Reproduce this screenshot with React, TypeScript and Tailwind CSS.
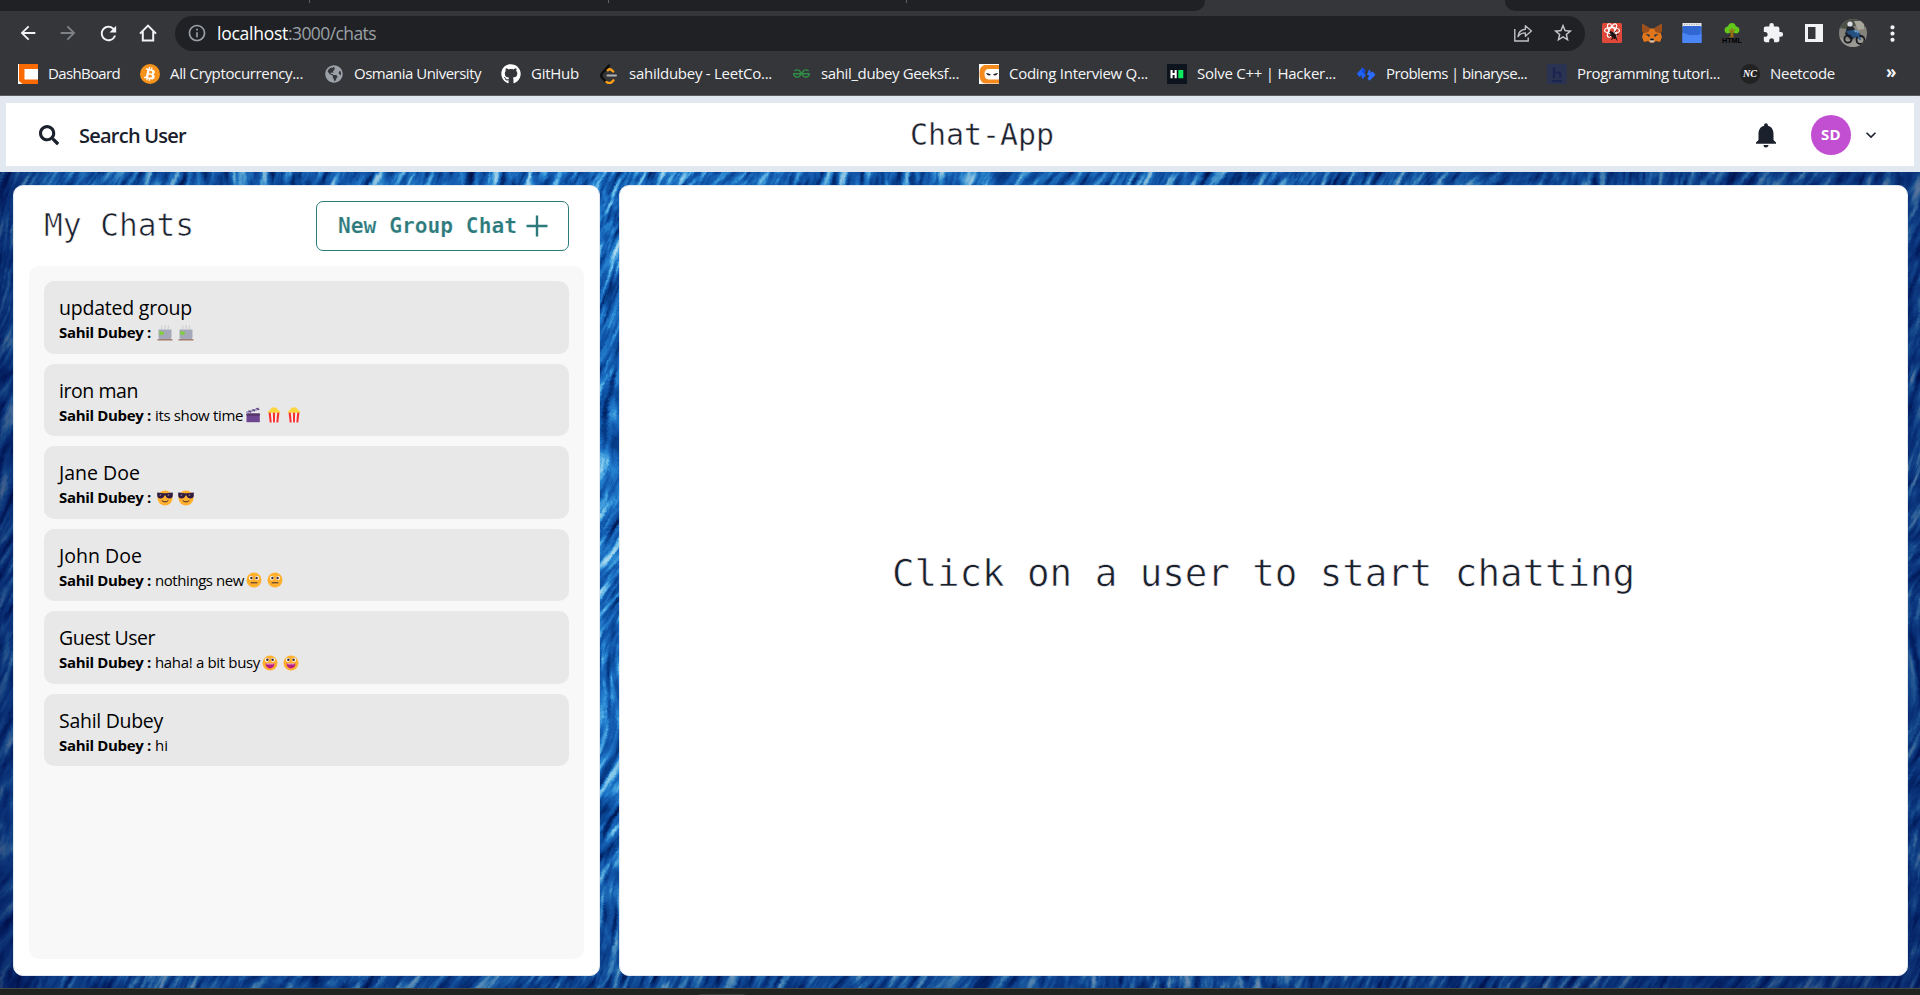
import { useLayoutEffect, useRef, type ReactNode } from "react";
import { FaSearch, FaGithub, FaBtc, FaGlobeAmericas } from "react-icons/fa";
import { SiGeeksforgeeks } from "react-icons/si";
import {
  MdArrowBack,
  MdArrowForward,
  MdRefresh,
  MdInfoOutline,
  MdStarBorder,
  MdExtension,
  MdMoreVert,
  MdNotifications,
  MdExpandMore,
} from "react-icons/md";

/** One line of text whose letter spacing is adjusted to fill a given width. */
function Fit({ text, width, className = "" }: { text: string; width: number; className?: string }) {
  const ref = useRef<HTMLSpanElement>(null);
  useLayoutEffect(() => {
    const el = ref.current;
    if (!el) return;
    el.style.letterSpacing = "0px";
    const natural = el.getBoundingClientRect().width;
    el.style.letterSpacing = `${(width - natural) / text.length}px`;
  }, [text, width]);
  return (
    <span ref={ref} className={`inline-block shrink-0 whitespace-pre ${className}`}>
      {text}
    </span>
  );
}

/* ---------- browser chrome ---------- */

const HomeIcon = () => (
  <svg viewBox="0 0 20 20" className="size-5" fill="none" stroke="#f1f3f4" strokeWidth="2">
    <path d="M2 10.6 10 2.6l8 8M4.8 8.6V17.6h10.4V8.6" />
  </svg>
);

const ShareIcon = () => (
  <svg viewBox="0 0 20 20" className="size-5" fill="none" stroke="#bdc1c6" strokeWidth="1.4">
    <path d="M1.800 6v12h13.400v-3.400" />
    <path d="M5 13.600c.5-4.600 3-7 7.400-7.300V2.800L18.400 8l-6 5.200V9.900C9 9.900 6.800 11 5 13.600Z" strokeLinejoin="round" />
  </svg>
);

const ReactDevIcon = () => (
  <svg viewBox="0 0 20 20" className="size-5">
    <rect width="20" height="20" rx="1.500" fill="#e0483a" />
    <g fill="none" stroke="#fff" strokeWidth="1.200">
      <ellipse cx="10" cy="7.500" rx="7.500" ry="2.800" />
      <ellipse cx="10" cy="7.500" rx="7.500" ry="2.800" transform="rotate(60 10 7.500)" />
      <ellipse cx="10" cy="7.500" rx="7.500" ry="2.800" transform="rotate(120 10 7.500)" />
    </g>
    <g fill="#1c1110" stroke="#1c1110">
      <ellipse cx="11.500" cy="12.500" rx="1.700" ry="3.300" transform="rotate(-38 11.500 12.500)" />
      <circle cx="8.700" cy="9.300" r=".9" />
      <path d="m7.500 13 3-1.500M9.500 17l1.600-3M12.500 9.500l1.700-2M13.500 12l3-.4M13.500 14l1.700 3.500" strokeWidth="1" />
    </g>
  </svg>
);

const FoxIcon = () => (
  <svg viewBox="0 0 20 20" className="size-5">
    <path d="M.6 1 8 5.500h4L19.400 1 20 6.500l-1.300 3.700L20 14l-2 5-4-1-2 1.600H8L6 18l-4 1-2-5 1.300-3.800L0 6.500Z" fill="#e2761b" />
    <path d="M.6 1 8 5.500 6.500 9l-5.200 1.200L0 6.500ZM19.400 1 12 5.500 13.500 9l5.200 1.200L20 6.500Z" fill="#9a4f1c" />
    <path d="m3.500 10.800 4.500 1-1 2.200ZM16.500 10.800l-4.500 1 1 2.200Z" fill="#233447" />
    <path d="m7.500 17 1-1.400h3l1 1.400-.8 2.400H8.300Z" fill="#d7c1b3" />
    <path d="M8.500 15.600h3l.6 1.600H7.900Z" fill="#161616" />
  </svg>
);

const BlueNoteIcon = () => (
  <svg viewBox="0 0 20 20" className="size-5">
    <rect x=".5" width="19" height="4" fill="#e8eaed" />
    <path d="M2 1.300h16" stroke="#9aa0a6" strokeDasharray="1.200 1.200" />
    <path d="M.5 3h19v17H.5Z" fill="#4a83ee" />
    <path d="M1.200 3h17.600l-.8 9H8L1.200 10Z" fill="#3167d3" />
    <path d="M.5 9.500c3 2.500 6 3.300 10 3.300s7-1 9-2V20H.5Z" fill="#4a86f5" />
  </svg>
);

const TreeIcon = () => (
  <svg viewBox="0 0 20 20" className="size-5">
    <path d="M8.600 8h2.800v6.500h1.800H6.800L8.600 13Z" fill="#9a6a14" />
    <path d="M10 0c2.400 0 3.600 1.500 3.800 3.200C16 3.400 17.500 5 17.500 7S16 10.400 14 10.400c-1 0-1.800-.4-2.300-.8H8.300c-.6.5-1.400.8-2.300.8C4 10.400 2.500 9 2.500 7S4 3.400 6.200 3.200C6.400 1.500 7.600 0 10 0Z" fill="#62c81c" />
    <path d="m10 13-.2-8M10 9l3-2.500M10 9.500 7.200 7" stroke="#9a6a14" strokeWidth="1.200" fill="none" />
    <text x="0" y="19.500" fontSize="6.500" fontWeight="900" fontFamily="Liberation Sans, sans-serif" textLength="20" lengthAdjust="spacingAndGlyphs" fill="#000">
      HTML
    </text>
  </svg>
);

const SidePanelIcon = () => (
  <svg viewBox="0 0 20 20" className="size-5">
    <path d="M1 1h18v18H1Zm3 3v12h7.500V4Z" fill="#f1f3f4" fillRule="evenodd" />
  </svg>
);

const ProfilePicture = () => (
  <svg viewBox="0 0 28 28" className="size-7">
    <defs>
      <clipPath id="profile">
        <circle cx="14" cy="14" r="14" />
      </clipPath>
    </defs>
    <g clipPath="url(#profile)">
      <rect width="28" height="28" fill="#85827c" />
      <path d="M0 0h28v8L18 6 8 10 0 9Z" fill="#4b5046" />
      <path d="M15 2h10v8l-6 1Z" fill="#a9a69c" />
      <path d="M0 18l12 4 16-4v10H0Z" fill="#9b9792" />
      <path d="M8 8c3-2 7-1 8 3l2 6-6 4-6-6Z" fill="#20242b" />
      <circle cx="11" cy="5" r="2.600" fill="#d7dade" />
      <path d="m7 12 7-1 8 4-3 4-8-1Z" fill="#244f7e" />
      <path d="m14 11 6 1-2 3Z" fill="#6aa0d0" />
      <g fill="none" stroke="#15181c" strokeWidth="1.800">
        <circle cx="21.500" cy="21" r="4" />
        <circle cx="9" cy="20" r="3.600" />
      </g>
      <path d="m17 13 4.500 8" stroke="#2d5f95" strokeWidth="1.600" />
    </g>
  </svg>
);

const ChefBoxIcon = () => (
  <svg viewBox="0 0 20 20" className="size-5">
    <rect width="20" height="20" fill="#fff" />
    <path d="M1 0h19v5H6.500v10.500H20V20H4.500L1 17Z" fill="#f96a02" />
  </svg>
);

const LeetIcon = () => (
  <svg viewBox="0 0 20 20" className="size-5" fill="none" strokeWidth="2.400" strokeLinecap="round" strokeLinejoin="round">
    <path d="M10 1.500 3 9.500c-1 1.200-1 2.800 0 4l4 4.300" stroke="#0c0c0c" />
    <path d="m8.800 6.200 1.400-.9c.8-.3 1.500-.1 2.200.5l1.800 1.700M7.500 17.900c1.800 1.500 4 1.400 5.500 0l1.500-1.600" stroke="#ffa116" />
    <path d="M8.500 11.600H17" stroke="#b3b3b3" strokeWidth="2" />
  </svg>
);

const NinjaIcon = () => (
  <svg viewBox="0 0 20 20" className="size-5">
    <rect width="20" height="20" fill="#fff" />
    <path d="M7 1h13v4H9.500C7 5 5.500 6.500 5.500 10S7 15.400 9.500 15.400H20V19.500H7c-4 0-6.500-3-6.500-9.500S3 1 7 1Z" fill="#f58a1f" />
    <path d="M7 9c2 .2 3.500.6 5 1.700-1.500 1.200-4 1-5-1.700ZM19 9c-2 .2-3.500.6-5 1.700 1.500 1.200 4 1 5-1.700Z" fill="#222" />
  </svg>
);

const HackerIcon = () => (
  <svg viewBox="0 0 20 20" className="size-5">
    <rect width="20" height="20" fill="#0e141e" />
    <path d="M3.500 6H5.600v3h2V6h2.100v8.200H7.600V11h-2v3.200H3.500Z" fill="#fff" />
    <rect x="11.300" y="6" width="5" height="8.200" fill="#0bea5c" />
  </svg>
);

const BinaryIcon = () => (
  <svg viewBox="0 0 20 20" className="size-5">
    <path d="M6.500 3.500 9.500 6.500 8 9.500l2 1-3 4.500-1.500-1.500.5-2.500L3.500 13 .8 9.800Z" fill="#1f62f5" />
    <path d="m13 5.500 1.500 1.500-.5 2 2.500-1.500 3 3.300-6 6-2-2 1.700-3-2.200-1.300Z" fill="#2c6bff" />
    <path d="m6.500 3.500 3 3L8 9.500 6 8Z" fill="#1447d8" />
  </svg>
);

const BoxedHIcon = () => (
  <svg viewBox="0 0 20 20" className="size-5">
    <rect width="20" height="20" fill="#2b3353" />
    <path d="M7 3v11M7 8.500h4.500c1.200 0 1.800.7 1.800 1.800V14M5 17.200h10" stroke="#1c2550" strokeWidth="2.200" fill="none" />
  </svg>
);

const BOOKMARKS: { label: string; slot: string; textWidth: number; icon: ReactNode }[] = [
  { label: "DashBoard", slot: "w-[122px]", textWidth: 72, icon: <ChefBoxIcon /> },
  {
    label: "All Cryptocurrency...",
    slot: "w-[184px]",
    textWidth: 133,
    icon: (
      <span className="grid size-5 place-items-center rounded-full bg-[#f7931a]">
        <FaBtc className="size-3.5 rotate-12 text-white" />
      </span>
    ),
  },
  {
    label: "Osmania University",
    slot: "w-[177px]",
    textWidth: 127,
    icon: (
      <span className="grid size-5 place-items-center">
        <FaGlobeAmericas className="size-[18px] text-[#9aa0a6]" />
      </span>
    ),
  },
  { label: "GitHub", slot: "w-[98px]", textWidth: 48, icon: <FaGithub className="size-5 text-white" /> },
  { label: "sahildubey - LeetCo...", slot: "w-[192px]", textWidth: 143, icon: <LeetIcon /> },
  {
    label: "sahil_dubey Geeksf...",
    slot: "w-[188px]",
    textWidth: 138,
    icon: (
      <span className="grid size-5 place-items-center">
        <SiGeeksforgeeks className="size-[17px] text-[#2f8d46]" />
      </span>
    ),
  },
  { label: "Coding Interview Q...", slot: "w-[188px]", textWidth: 139, icon: <NinjaIcon /> },
  { label: "Solve C++ | Hacker...", slot: "w-[189px]", textWidth: 139, icon: <HackerIcon /> },
  { label: "Problems | binaryse...", slot: "w-[191px]", textWidth: 141, icon: <BinaryIcon /> },
  { label: "Programming tutori...", slot: "w-[193px]", textWidth: 143, icon: <BoxedHIcon /> },
  {
    label: "Neetcode",
    slot: "w-[122px]",
    textWidth: 65,
    icon: (
      <span className="grid size-5 place-items-center rounded-full bg-[#222222] font-['Liberation_Serif',serif] text-[10px] leading-none font-bold text-white italic">
        NC
      </span>
    ),
  },
];

function TabStrip() {
  return (
    <div className="flex h-[11px] justify-between">
      <div className="flex w-[1205px] rounded-br-[10px] bg-[#202124]">
        <div className="h-[3px] w-[310px] border-r border-[#5f6368]" />
        <div className="h-[3px] w-[299px] border-r border-[#5f6368]" />
        <div className="h-[3px] w-[298px] border-r border-[#5f6368]" />
      </div>
      <div className="w-[415px] rounded-bl-[10px] bg-[#202124]" />
    </div>
  );
}

function Toolbar() {
  return (
    <div className="flex h-[44px] items-center">
      <div className="flex items-center gap-[18px] pl-[17px] text-[#f1f3f4]">
        <MdArrowBack className="size-[22px]" />
        <MdArrowForward className="size-[22px] text-[#7e8185]" />
        <MdRefresh className="size-[23px]" />
        <HomeIcon />
      </div>
      <div className="ml-[17px] flex h-[35px] w-[1410px] items-center rounded-full bg-[#202124] pr-[11px] pl-[12px]">
        <MdInfoOutline className="size-5 text-[#9aa0a6]" />
        <div className="ml-[10px] flex flex-1 text-[17.5px] leading-6">
          <Fit text="localhost" width={71} className="text-white" />
          <Fit text=":3000/chats" width={88} className="text-[#9aa0a6]" />
        </div>
        <ShareIcon />
        <MdStarBorder className="ml-[19px] size-[22px] text-[#c4c7cb]" />
      </div>
      <div className="ml-[17px] flex items-center gap-5">
        <ReactDevIcon />
        <FoxIcon />
        <BlueNoteIcon />
        <TreeIcon />
        <MdExtension className="size-[22px] text-[#f1f3f4]" />
        <SidePanelIcon />
      </div>
      <div className="ml-[15px]">
        <ProfilePicture />
      </div>
      <MdMoreVert className="ml-[13px] size-[25px] text-[#f1f3f4]" />
    </div>
  );
}

function BookmarksBar() {
  return (
    <div className="flex h-[41px] items-center border-b border-[#5a5b5f] pb-[3px] pl-[18px] text-[15px] leading-5 text-[#f4f5f6]">
      {BOOKMARKS.map((b) => (
        <div key={b.label} className={`flex shrink-0 items-center gap-[10px] ${b.slot}`}>
          {b.icon}
          <Fit text={b.label} width={b.textWidth} className="-mt-px" />
        </div>
      ))}
      <span className="ml-[24px] pb-1 text-[17px] font-bold">»</span>
    </div>
  );
}

/* ---------- page ---------- */

function PaintedBackground() {
  return (
    <svg className="absolute inset-0 size-full" preserveAspectRatio="none" viewBox="0 0 1920 816">
      <defs>
        <filter id="paint" x="0" y="0" width="100%" height="100%" colorInterpolationFilters="sRGB">
          <feTurbulence type="fractalNoise" baseFrequency="0.13 0.025" numOctaves="5" seed="8" result="fine" />
          <feTurbulence type="fractalNoise" baseFrequency="0.006 0.006" numOctaves="1" seed="3" result="warp" />
          <feDisplacementMap in="fine" in2="warp" scale="110" xChannelSelector="R" yChannelSelector="G" />
          <feColorMatrix values="1 0 0 0 0  1 0 0 0 0  1 0 0 0 0  0 0 0 0 1" />
          <feComponentTransfer>
            <feFuncR type="table" tableValues="0 0 0 0.020 0.050 0.090 0.150 0.350 0.600 0.700 0.700" />
            <feFuncG type="table" tableValues="0.080 0.080 0.120 0.210 0.310 0.390 0.520 0.700 0.820 0.860 0.860" />
            <feFuncB type="table" tableValues="0.260 0.260 0.370 0.500 0.630 0.720 0.820 0.900 0.930 0.950 0.950" />
          </feComponentTransfer>
        </filter>
        <linearGradient id="shade">
          <stop offset="0" stopColor="#020b45" stopOpacity="0.6" />
          <stop offset="0.03" stopColor="#020b45" stopOpacity="0.2" />
          <stop offset="0.3" stopColor="#020b45" stopOpacity="0" />
          <stop offset="0.65" stopColor="#020b45" stopOpacity="0.15" />
          <stop offset="1" stopColor="#020b45" stopOpacity="0.5" />
        </linearGradient>
        <linearGradient id="shadeDown" x2="0" y2="1">
          <stop offset="0.8" stopColor="#020b45" stopOpacity="0" />
          <stop offset="1" stopColor="#020b45" stopOpacity="0.3" />
        </linearGradient>
      </defs>
      <rect width="1920" height="816" fill="#0f4fa5" />
      <g transform="rotate(22 960 408)">
        <rect x="-200" y="-500" width="2320" height="1820" filter="url(#paint)" />
      </g>
      <rect width="1920" height="816" fill="url(#shade)" />
      <rect width="1920" height="816" fill="url(#shadeDown)" />
    </svg>
  );
}

function PageHeader() {
  return (
    <header className="flex h-[75px] items-center border-6 border-[#e2e8f0] bg-white text-[#1a202c]">
      <div className="flex w-[904px] items-center pl-[33px]">
        <FaSearch className="size-5" />
        <Fit text="Search User" width={107} className="mt-[2px] ml-5 text-[20px] leading-7 font-semibold" />
      </div>
      <h1 className="font-['DejaVu_Sans_Mono',monospace] text-[30px] leading-10 [-webkit-text-stroke:0.4px_white]">
        <Fit text="Chat-App" width={144} />
      </h1>
      <div className="flex flex-1 items-center justify-end pr-[33px]">
        <MdNotifications className="size-[30px]" />
        <span className="ml-[30px] grid size-10 place-items-center rounded-full bg-[#c24fd2] text-[15px] font-bold text-white">
          <Fit text="SD" width={20} />
        </span>
        <MdExpandMore className="ml-[10px] size-5" />
      </div>
    </header>
  );
}

const Face = ({ children }: { children: ReactNode }) => (
  <svg viewBox="0 0 16 16" className="size-4">
    <circle cx="8" cy="8" r="7.500" fill="#ffb02e" />
    {children}
  </svg>
);

const Mug = () => (
  <svg viewBox="0 0 16 16" className="size-4">
    <path d="M5 .5 4.500 4M8.300 0l-.6 4M11.500.5 11 4" stroke="#c4c0c8" strokeWidth=".8" fill="none" />
    <path d="M1.500 4.500h13V12c0 1.500-1 2.300-2.300 2.300H3.800c-1.300 0-2.300-.8-2.300-2.300Z" fill="#a5a8b8" />
    <path d="M2.500 5.500 4.500 7l2-.5.4 3-4.400.5Z" fill="#7fcf35" />
    <rect x=".5" y="14.300" width="15" height="1.100" fill="#8d5a45" />
  </svg>
);

const Clapper = () => (
  <svg viewBox="0 0 16 16" className="size-4">
    <path d="M1.500 6.500h13.300v8.700H1.500Z" fill="#6d4590" />
    <path d="M1.500 6.500h13.300v2.200H1.500Z" fill="#533566" />
    <path d="m1 4.500 13-4 .6 2.200-13 3.800Z" fill="#a59acb" />
    <path d="m3.500 3.700 2.500 1.500M7.500 2.500 10 4M11.500 1.300 14 2.800" stroke="#533566" strokeWidth="1.200" />
  </svg>
);

const Popcorn = () => (
  <svg viewBox="0 0 16 16" className="size-4">
    <path d="M2.500 5h11L12.300 15.500H3.700Z" fill="#f4f4f4" />
    <path d="M2.500 5h2.300l.9 10.500h-2ZM6.800 5h2.400l-.3 10.500H7.100ZM11.200 5h2.300l-1.200 10.500h-2Z" fill="#f8312f" />
    <path d="M2.200 5.800C1.800 4 3 3 4.300 3 4.500 1.300 6 .3 8 .3s3.500 1 3.700 2.700c1.300 0 2.500 1 2.100 2.800Z" fill="#fcd53f" />
  </svg>
);

const Cool = () => (
  <Face>
    <path d="M.2 2.500 7 3.200h2l6.800-.7v3c0 2-1.300 3-3.300 3S9 7.500 8.600 5.600H7.400C7 7.500 5.500 8.500 3.500 8.500S.2 7.500.2 5.500Z" fill="#321b41" />
    <path d="M4 4.300 3 5.800M12 4.300l-1 1.500" stroke="#b4acbc" strokeWidth=".9" />
    <path d="M5 10.800c1.800 1.500 4.200 1.500 6 0" stroke="#402a32" strokeWidth="1" fill="none" strokeLinecap="round" />
  </Face>
);

const Neutral = () => (
  <Face>
    <g fill="#fff">
      <circle cx="5" cy="6" r="2" />
      <circle cx="11" cy="6" r="2" />
    </g>
    <g fill="#402a32">
      <circle cx="5.400" cy="6" r="1.200" />
      <circle cx="10.600" cy="6" r="1.200" />
    </g>
    <path d="M5 10.800h6" stroke="#402a32" strokeWidth="1" strokeLinecap="round" />
  </Face>
);

const Grin = () => (
  <Face>
    <g fill="#fff">
      <circle cx="5" cy="4.800" r="2.100" />
      <circle cx="11" cy="4.800" r="2.100" />
    </g>
    <g fill="#402a32">
      <circle cx="5.400" cy="4.800" r="1.300" />
      <circle cx="10.600" cy="4.800" r="1.300" />
    </g>
    <path d="M3.500 8.600h9c0 3.100-1.900 4.900-4.500 4.900S3.500 11.700 3.500 8.600Z" fill="#bb1d80" />
    <path d="M4.500 8.600h7v.7h-7Z" fill="#fff" />
  </Face>
);

interface Chat {
  name: string;
  nameWidth: number;
  message?: string;
  messageWidth?: number;
  emojis: ReactNode[];
}

const CHATS: Chat[] = [
  { name: "updated group", nameWidth: 133, emojis: [<Mug />, <Mug />] },
  { name: "iron man", nameWidth: 79, message: "its show time", messageWidth: 88, emojis: [<Clapper />, <Popcorn />, <Popcorn />] },
  { name: "Jane Doe", nameWidth: 81, emojis: [<Cool />, <Cool />] },
  { name: "John Doe", nameWidth: 83, message: "nothings new", messageWidth: 89, emojis: [<Neutral />, <Neutral />] },
  { name: "Guest User", nameWidth: 96, message: "haha! a bit busy", messageWidth: 105, emojis: [<Grin />, <Grin />] },
  { name: "Sahil Dubey", nameWidth: 104, message: "hi", messageWidth: 13, emojis: [] },
];

function ChatCard({ chat }: { chat: Chat }) {
  return (
    <li className="flex h-[72.500px] flex-col rounded-[10px] bg-[#e8e8e8] px-[15px] pt-[12px] text-black">
      <Fit text={chat.name} width={chat.nameWidth} className="self-start text-[19.500px] leading-[30px]" />
      <div className="-mt-[2px] flex h-[22px] items-center text-[15px] leading-[22px]">
        <Fit text="Sahil Dubey :" width={92} className="font-bold" />
        {chat.message && chat.messageWidth ? (
          <Fit text={chat.message} width={chat.messageWidth} className="ml-[4px]" />
        ) : (
          <span className="w-[4px]" />
        )}
        <span className="mt-px ml-[2px] flex gap-[4.500px]">
          {chat.emojis.map((emoji, i) => (
            <span key={i}>{emoji}</span>
          ))}
        </span>
      </div>
    </li>
  );
}

function MyChats() {
  return (
    <section className="flex w-[587px] flex-col rounded-[10px] border border-[#e2e8f0] bg-white px-[15px] pt-[15px] pb-4">
      <div className="flex items-center justify-between pr-[15px] pl-[15px] font-['DejaVu_Sans_Mono',monospace]">
        <h2 className="pb-[2px] text-[31.250px] leading-[46px] text-[#1a202c] [-webkit-text-stroke:0.6px_white]">
          <Fit text="My Chats" width={150} />
        </h2>
        <button className="flex h-[50px] w-[253px] items-center rounded-[7px] border border-[#2c7a7b] pl-[21px] text-[21.250px] text-[#2c7a7b]">
          <Fit text="New Group Chat" width={179} className="font-bold [-webkit-text-stroke:0.2px_white]" />
          <svg viewBox="0 0 22 22" className="ml-[9px] size-[22px]" stroke="#2c7a7b" strokeWidth="2.400">
            <path d="M11 .5v21M.5 11h21" />
          </svg>
        </button>
      </div>
      <ul className="mt-[15px] flex flex-1 flex-col gap-[10px] rounded-[10px] bg-[#f8f8f8] p-[15px]">
        {CHATS.map((chat) => (
          <ChatCard key={chat.name} chat={chat} />
        ))}
      </ul>
    </section>
  );
}

export default function App() {
  return (
    <div className="flex h-[995px] w-[1920px] flex-col overflow-hidden font-['Open_Sans',sans-serif]">
      <div className="bg-[#35363a]">
        <TabStrip />
        <Toolbar />
        <BookmarksBar />
      </div>
      <div className="h-px shrink-0 bg-[#e2e8f0]" />
      <PageHeader />
      <main className="relative min-h-0 flex-1">
        <PaintedBackground />
        <div className="relative flex h-full justify-between pt-[13px] pr-3 pb-3 pl-[13px]">
          <MyChats />
          <section className="flex w-[1289px] items-center justify-center rounded-[10px] border border-[#e2e8f0] bg-white">
            <p className="pb-4 font-['DejaVu_Sans_Mono',monospace] text-[37.500px] leading-[56px] text-[#1a202c] [-webkit-text-stroke:0.6px_white]">
              <Fit text="Click on a user to start chatting" width={743} />
            </p>
          </section>
        </div>
      </main>
      <footer className="flex h-[7px] shrink-0 border-t border-[#4a4b45] bg-[#1f2420]">
        <div className="mt-[5px] ml-[699px] h-px w-[46px] rounded-t bg-[#3c403c]" />
      </footer>
    </div>
  );
}
